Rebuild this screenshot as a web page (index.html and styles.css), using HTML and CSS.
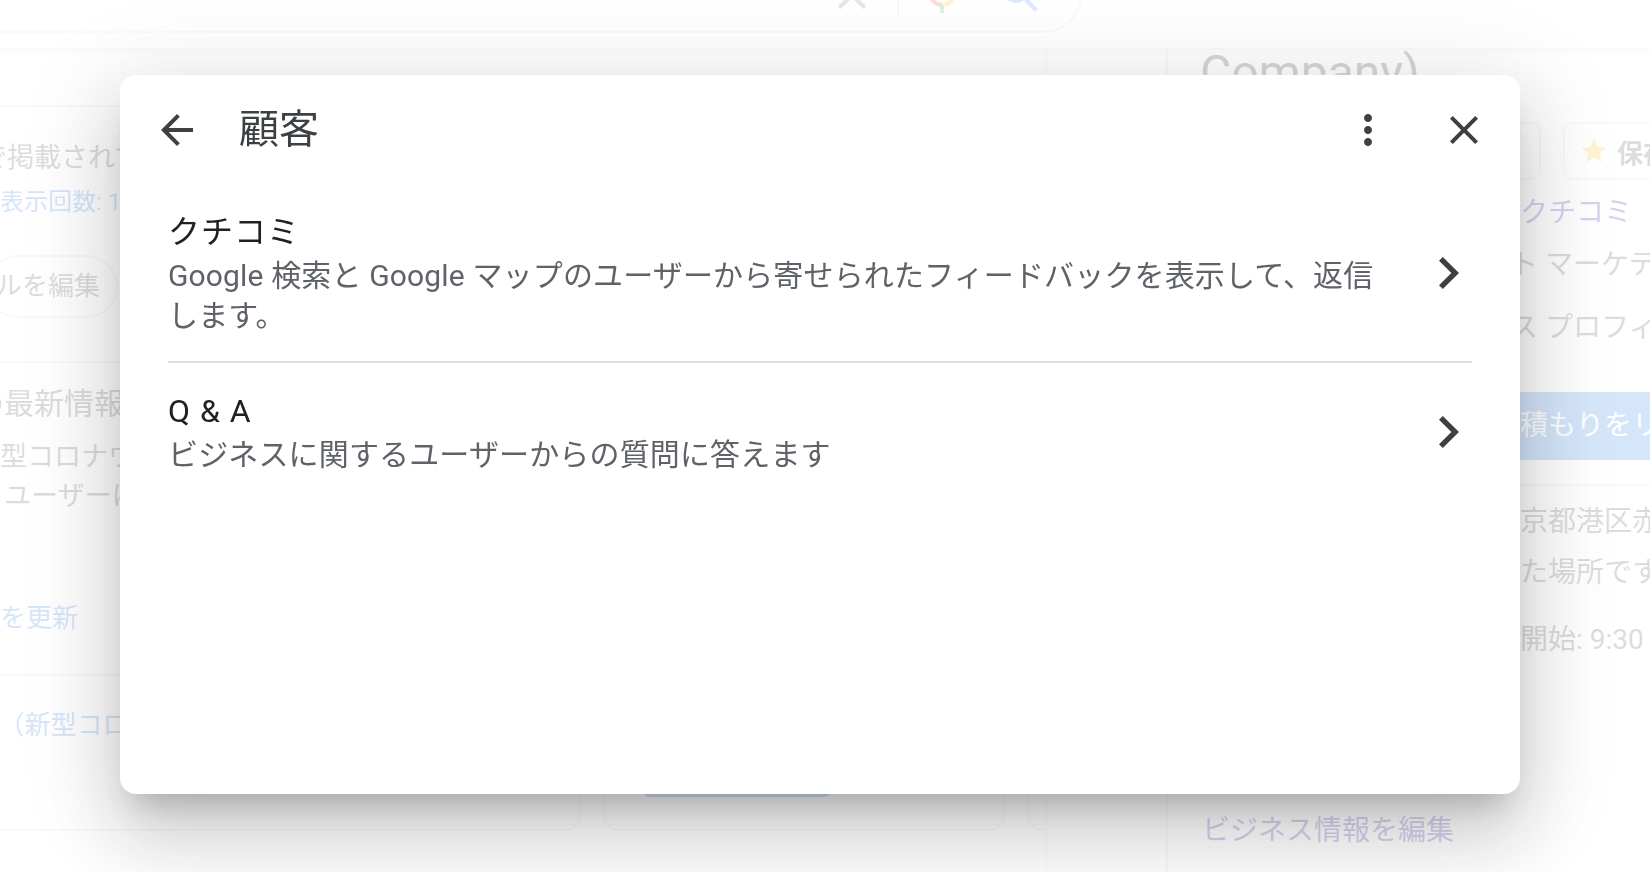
FILE: index.html
```html
<!DOCTYPE html>
<html lang="ja">
<head>
<meta charset="utf-8">
<title>顧客</title>
<link rel="stylesheet" href="styles.css">
</head>
<body>
<div class="page">
  <header class="topbar">
    <div class="searchbox">
      <svg class="sb-icon" viewBox="0 0 24 24"><path fill="#70757a" d="M19 6.41 17.59 5 12 10.59 6.41 5 5 6.41 10.59 12 5 17.59 6.41 19 12 13.41 17.59 19 19 17.59 13.41 12z"/></svg>
      <span class="sb-divider"></span>
      <svg class="sb-icon" viewBox="0 0 24 24"><rect x="9" y="2.5" width="6" height="11" rx="3" fill="#4285f4"/><path d="M6 11a6 6 0 0 0 6 6" fill="none" stroke="#ea4335" stroke-width="2"/><path d="M12 17a6 6 0 0 0 6-6" fill="none" stroke="#fbbc04" stroke-width="2"/><path d="M12 17v4" stroke="#34a853" stroke-width="2"/></svg>
      <svg class="sb-icon sb-search" viewBox="0 0 24 24"><path fill="#4285f4" d="M15.5 14h-.79l-.28-.27A6.471 6.471 0 0 0 16 9.5 6.5 6.5 0 1 0 9.5 16c1.610 0 3.090-.59 4.230-1.570l.27.28v.79l5 4.99L20.49 19l-4.99-5zm-6 0C7.01 14 5 11.99 5 9.5S7.01 5 9.5 5 14 7.01 14 9.5 11.99 14 9.5 14z"/></svg>
    </div>
  </header>
  <div class="content">
    <main class="main">
      <section class="card col-a">
        <div class="sec sec1">
          <p class="bg-head">で掲載されて</p>
          <p class="bg-link bg-small">表示回数: 15</p>
          <span class="pill">ルを編集</span>
        </div>
        <div class="sec sec2">
          <p class="bg-head bg-big">の最新情報</p>
          <p class="bg-body l-kata">新型コロナウイ</p>
          <p class="bg-body l-user">るユーザーに</p>
          <p class="bg-link l-upd">報を更新</p>
        </div>
        <div class="sec sec3">
          <p class="bg-link l-covid">9（新型コロナ</p>
        </div>
      </section>
      <section class="card col-b">
        <span class="btn-blue"></span>
      </section>
      <section class="card col-c"></section>
    </main>
    <div class="gutter"></div>
    <aside class="side">
      <h2 class="side-title">Company)</h2>
      <div class="side-btns">
        <span class="sbtn b1"></span>
        <span class="sbtn b2"></span>
        <span class="sbtn b3"><svg class="star" viewBox="0 0 24 24"><path fill="#fbbc04" d="M12 17.27 18.18 21l-1.64-7.03L22 9.24l-7.19-.61L12 2 9.19 8.63 2 9.24l5.46 4.73L5.82 21z"/></svg><b>保存</b></span>
      </div>
      <div class="srow link r1">クチコミ</div>
      <div class="srow r2">ト マーケティング</div>
      <div class="srow r3">ス プロフィール</div>
      <div class="cta">見積もりをリクエスト</div>
      <div class="side-rule"></div>
      <div class="srow r4">東京都港区赤坂</div>
      <div class="srow r5">した場所です</div>
      <div class="srow r6">業開始: 9:30 ·</div>
      <div class="srow link r7">ビジネス情報を編集</div>
    </aside>
  </div>
</div>

<div class="scrim"></div>

<div class="dialog" role="dialog" aria-label="顧客">
  <div class="dlg-head">
    <button class="icon-btn back" aria-label="戻る">
      <svg viewBox="0 0 24 24"><path d="M20 11H7.83l5.59-5.59L12 4l-8 8 8 8 1.41-1.41L7.83 13H20v-2z"/></svg>
    </button>
    <h1 class="dlg-title">顧客</h1>
    <button class="icon-btn more" aria-label="その他">
      <svg viewBox="0 0 24 24"><path d="M12 8c1.1 0 2-.9 2-2s-.9-2-2-2-2 .9-2 2 .9 2 2 2zm0 2c-1.1 0-2 .9-2 2s.9 2 2 2 2-.9 2-2-.9-2-2-2zm0 6c-1.1 0-2 .9-2 2s.9 2 2 2 2-.9 2-2-.9-2-2-2z"/></svg>
    </button>
    <button class="icon-btn close" aria-label="閉じる">
      <svg viewBox="0 0 24 24"><path d="M19 6.41 17.59 5 12 10.59 6.41 5 5 6.41 10.59 12 5 17.59 6.41 19 12 13.41 17.59 19 19 17.59 13.41 12z"/></svg>
    </button>
  </div>
  <ul class="dlg-list">
    <li class="dlg-item">
      <div class="item-text">
        <div class="item-title">クチコミ</div>
        <div class="item-desc">Google 検索と Google マップのユーザーから寄せられたフィードバックを表示して、返信します。</div>
      </div>
      <span class="item-arrow"><svg viewBox="8.59 6 7.41 12" preserveAspectRatio="none"><path d="M10 6 8.59 7.41 13.17 12l-4.58 4.59L10 18l6-6z"/></svg></span>
    </li>
    <li class="dlg-item">
      <div class="item-text">
        <div class="item-title">Q &amp; A</div>
        <div class="item-desc">ビジネスに関するユーザーからの質問に答えます</div>
      </div>
      <span class="item-arrow"><svg viewBox="8.59 6 7.41 12" preserveAspectRatio="none"><path d="M10 6 8.59 7.41 13.17 12l-4.58 4.59L10 18l6-6z"/></svg></span>
    </li>
  </ul>
</div>
</body>
</html>
```

FILE: styles.css
```css
* { box-sizing: border-box; }
html, body { margin: 0; padding: 0; }
body {
  width: 1650px;
  height: 872px;
  overflow: hidden;
  background: #fff;
  font-family: Roboto, "Noto Sans CJK JP", sans-serif;
  color: #202124;
}
p { margin: 0; }

/* ---------- background page ---------- */
.page { width: 1650px; height: 872px; overflow: hidden; }

.topbar {
  position: relative;
  z-index: 1;
  display: flex;
  align-items: flex-start;
  height: 50px;
  background: #fff;
  border-bottom: 2px solid #e2e2e2;
  box-shadow: 0 2px 8px rgba(0,0,0,.10);
}
.searchbox {
  display: flex;
  align-items: center;
  justify-content: flex-end;
  flex: none;
  width: 1122px;
  height: 76px;
  margin: -43px 0 0 -40px;
  padding-right: 35px;
  border: 2px solid #dfe1e5;
  border-radius: 38px;
  background: #fff;
}
.sb-icon { width: 48px; height: 48px; flex: none; }
.sb-divider { width: 2px; height: 44px; background: #dadce0; margin: 0 19px 0 21px; }
.sb-search { margin-left: 31px; }

.content {
  display: grid;
  grid-template-columns: 1047px 119px 484px;
  height: 822px;
}
.main {
  display: flex;
  align-items: flex-start;
  gap: 22px;
  padding-top: 55px;
  overflow: hidden;
  border-right: 2px solid #e8e8e8;
}
.card {
  flex: none;
  height: 726px;
  border: 2px solid #dadce0;
  border-radius: 16px;
}
.col-a { width: 601px; margin-left: -20px; }
.sec { padding-left: 4px; white-space: nowrap; }
.sec1 { height: 256px; padding-top: 33px; border-bottom: 2px solid #dadce0; }
.sec2 { height: 313px; padding-top: 20px; border-bottom: 2px solid #dadce0; }
.sec3 { height: 153px; padding-top: 31px; }

.bg-head { font-size: 27px; line-height: 36px; color: #3c4043; margin-left: -6px; }
.bg-big { font-size: 30px; line-height: 42px; margin-left: -12px; }
.bg-link { font-size: 26px; line-height: 36px; color: #1a73e8; }
.bg-small { font-size: 24px; line-height: 32px; margin: 10px 0 0 14px; }
.bg-body { font-size: 27px; line-height: 36px; color: #3c4043; }
.l-kata { margin: 14px 0 0 -13px; }
.l-user { margin: 3px 0 0 -9px; }
.l-upd { margin: 86px 0 0 -12px; }
.l-covid { margin-left: -2px; }

.pill {
  display: inline-block;
  margin-top: 37px;
  height: 63px;
  padding: 0 16px 0 8px;
  border: 2px solid #dadce0;
  border-radius: 32px;
  font-size: 26px;
  line-height: 59px;
  color: #3c4043;
}

.col-b {
  width: 402px;
  display: flex;
  flex-direction: column;
  justify-content: flex-end;
  align-items: flex-start;
  padding: 0 0 32px 37px;
}
.btn-blue {
  width: 190px;
  height: 56px;
  border-radius: 8px;
  background: #1a73e8;
}
.col-c { width: 300px; }

.side {
  border-left: 2px solid #dadce0;
  padding-left: 32px;
  overflow: hidden;
  white-space: nowrap;
}
.side-title {
  margin: 0;
  font-size: 48px;
  line-height: 46px;
  font-weight: 400;
  color: #202124;
}
.side-btns { display: flex; gap: 22px; margin-top: 26px; }
.sbtn {
  flex: none;
  display: flex;
  align-items: center;
  height: 58px;
  border: 2px solid #dadce0;
  border-radius: 10px;
  font-size: 26px;
  color: #3c4043;
}
.b1 { width: 170px; }
.b2 { width: 149px; }
.b3 { width: 200px; padding-left: 14px; }
.b3 b { font-weight: 700; margin-left: 8px; }
.star { width: 30px; height: 30px; }

.srow { font-size: 28px; line-height: 40px; color: #3c4043; }
.srow.link { color: #1a0dab; }
.r1 { margin-top: 13px; padding-left: 320px; }
.r2 { margin-top: 12px; padding-left: 310px; }
.r3 { margin-top: 23px; padding-left: 310px; }
.cta {
  margin-top: 44px;
  width: 600px;
  height: 68px;
  padding-left: 292px;
  border-radius: 10px;
  background: #1a73e8;
  color: #fff;
  font-size: 28px;
  line-height: 68px;
}
.side-rule { margin: 24px 0 0 -32px; height: 2px; background: #dadce0; }
.r4 { margin-top: 16px; padding-left: 292px; }
.r5 { margin-top: 11px; padding-left: 292px; }
.r6 { margin-top: 27px; padding-left: 292px; }
.r7 { margin-top: 151px; padding-left: 2px; }

.scrim {
  position: fixed;
  inset: 0;
  z-index: 5;
  background: rgba(255,255,255,.82);
}

/* ---------- dialog ---------- */
.dialog {
  position: fixed;
  z-index: 10;
  left: 120px;
  top: 75px;
  width: 1400px;
  height: 719px;
  background: #fff;
  border-radius: 16px;
  box-shadow:
    0 22px 30px -14px rgba(0,0,0,.20),
    0 44px 70px 6px rgba(0,0,0,.12),
    0 16px 90px 16px rgba(0,0,0,.10);
}
.dlg-head {
  display: flex;
  align-items: center;
  padding: 31px 32px 29px 33px;
}
.icon-btn {
  flex: none;
  width: 48px;
  height: 48px;
  padding: 0;
  border: 0;
  background: none;
  display: flex;
  align-items: center;
  justify-content: center;
}
.icon-btn svg { width: 48px; height: 48px; fill: #3c4043; }
.dlg-title {
  flex: 1;
  margin: 0 0 0 38px;
  font-size: 40px;
  line-height: 48px;
  font-weight: 400;
  color: #3c4043;
}
.close { margin-left: 48px; }

.dlg-list { list-style: none; margin: 0 48px; padding: 0; }
.dlg-item {
  display: flex;
  align-items: center;
  padding: 27px 0 25px;
}
.dlg-item + .dlg-item { border-top: 2px solid #dadce0; padding-top: 26px; }
.item-text { flex: 1; min-width: 0; }
.item-title {
  font-size: 32px;
  line-height: 44px;
  letter-spacing: 1px;
  color: #202124;
}
.item-desc {
  margin-top: 2px;
  font-size: 30px;
  line-height: 40px;
  letter-spacing: .15px;
  color: #5f6368;
}
.item-arrow {
  flex: none;
  width: 82px;
  display: flex;
  justify-content: flex-end;
  padding-right: 13px;
}
.item-arrow svg { width: 20px; height: 32px; fill: #3c4043; }
```
